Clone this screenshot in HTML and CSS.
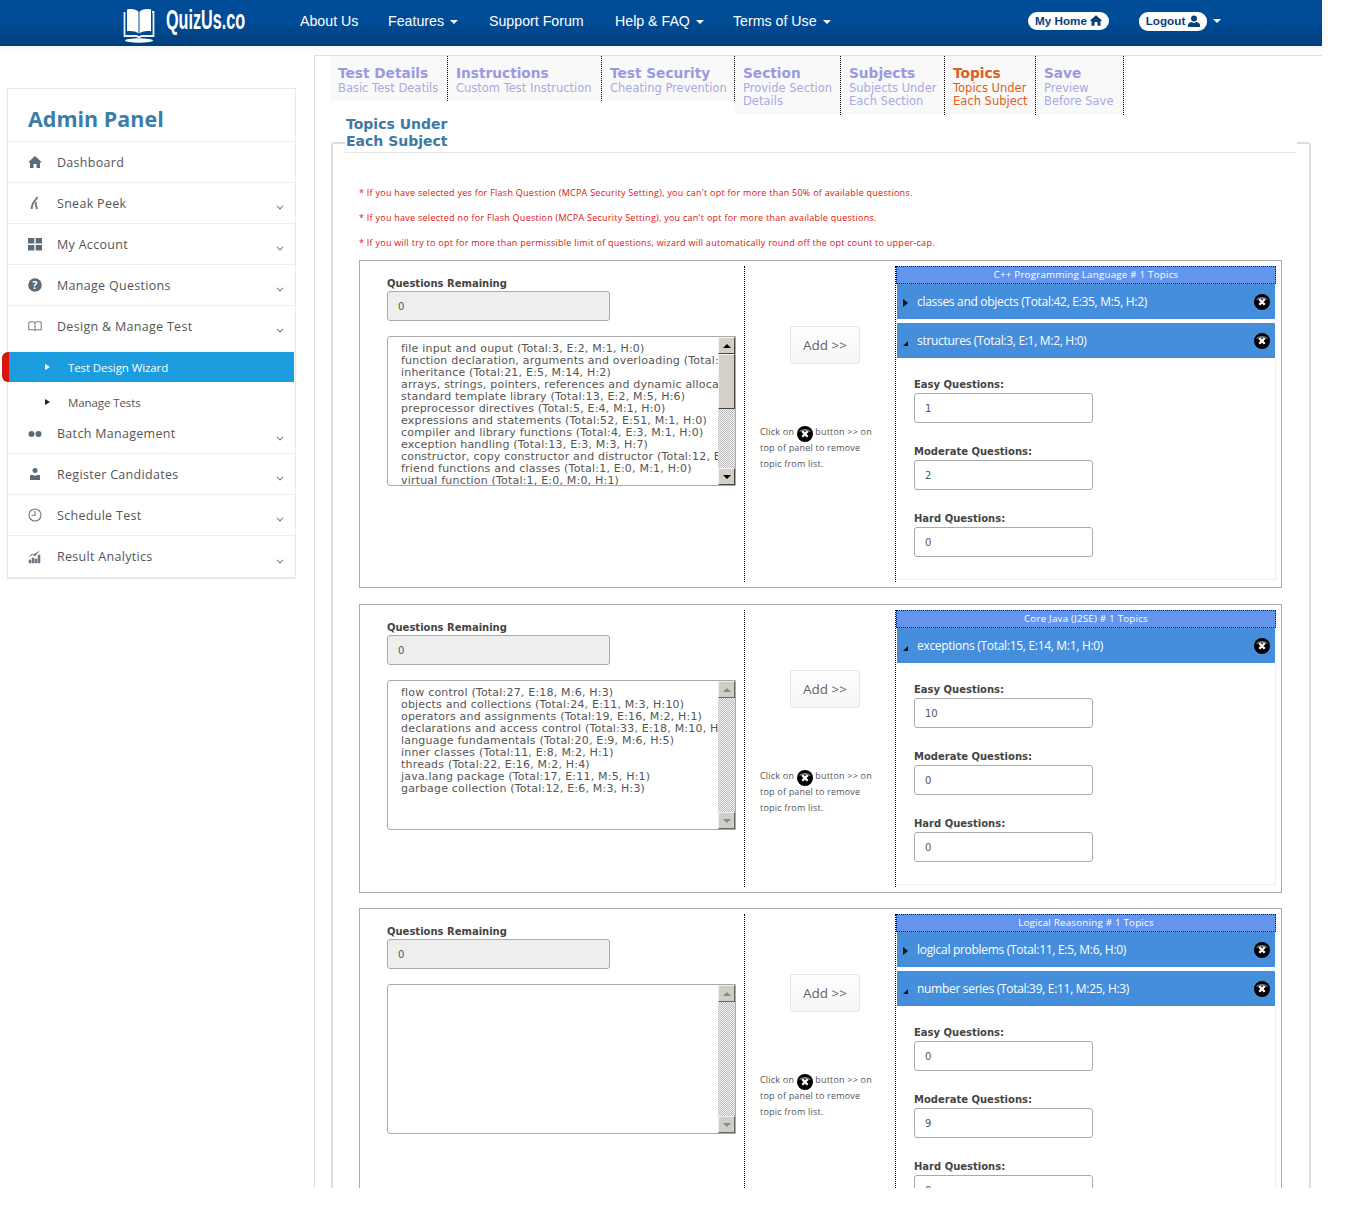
FILE: index.html
```html
<!DOCTYPE html>
<html lang="en">
<head>
<meta charset="utf-8">
<title>QuizUs.co</title>
<link rel="stylesheet" href="styles.css">
</head>
<body>
<div class="page">
<header class="topbar">
  <div class="logo">
    <svg class="logo-book" viewBox="0 0 32 36" width="32" height="36"><path d="M1.500 5v24h11.500c1 0 2 .8 3 1.500 1-.7 2-1.500 3-1.500h11.500V5h-1.500" fill="none" stroke="#e8f0f8" stroke-width="1.800"/><path d="M4 2.500c4.500-1 9-.5 11.500 2.200v21.800c-3-2.200-7-2.700-11.500-2.200zM28 2.500c-4.500-1-9-.5-11.500 2.200v21.800c3-2.200 7-2.700 11.500-2.200z" fill="#fff"/><ellipse cx="16" cy="33.500" rx="14" ry="2.200" fill="#fff"/></svg>
    <span class="logo-text">QuizUs.co</span>
  </div>
  <nav class="topnav">
    <a class="nav-a">About Us</a>
    <a class="nav-b">Features <i class="caret"></i></a>
    <a class="nav-c">Support Forum</a>
    <a class="nav-d">Help &amp; FAQ <i class="caret"></i></a>
    <a class="nav-e">Terms of Use <i class="caret"></i></a>
  </nav>
  <div class="pill pill-home">My Home <svg viewBox="0 0 16 14" width="12" height="11"><path d="M8 0l8 7-1 1-1-.8V14h-4V9H6v5H2V7.200L1 8 0 7z" fill="#0b3f78"/></svg></div>
  <div class="pill pill-logout">Logout <svg viewBox="0 0 14 14" width="12" height="12"><circle cx="7" cy="4" r="3.500" fill="#0b3f78"/><path d="M0 14v-2c0-2 2-3.500 4-3.800l3 1 3-1c2 .3 4 1.800 4 3.800v2z" fill="#0b3f78"/></svg></div>
  <i class="caret caret-logout"></i>
</header>

<div class="body-row">
  <aside class="sidebar">
    <h2 class="side-title">Admin Panel</h2>
    <div class="side-item"><svg class="side-icon" viewBox="0 0 14 14"><path d="M7 1l6.500 6-.8.8-.7-.6V13H8.500V9h-3v4H2V7.200l-.7.6L.5 7z" fill="#5d6b78"/></svg><span>Dashboard</span></div>
    <div class="side-item"><svg class="side-icon" viewBox="0 0 14 14"><path d="M9.500 1C8 4 5 6 4.300 9L3.500 13M8 6c-1 3 .5 4 1 7" fill="none" stroke="#6c7884" stroke-width="1.900"/></svg><span>Sneak Peek</span><i class="chev"></i></div>
    <div class="side-item"><svg class="side-icon" viewBox="0 0 14 14"><path d="M0 1h6.300v5.500H0zM7.700 1H14v5.500H7.700zM0 8h6.300v5.500H0zM7.700 8H14v5.500H7.700z" fill="#5d6b78"/></svg><span>My Account</span><i class="chev"></i></div>
    <div class="side-item"><svg class="side-icon" viewBox="0 0 14 14"><circle cx="7" cy="7" r="6.800" fill="#5d6b78"/><text x="7" y="11" class="q-mark">?</text></svg><span>Manage Questions</span><i class="chev"></i></div>
    <div class="side-item side-open"><svg class="side-icon" viewBox="0 0 14 14"><path d="M7 3.500C5.500 2.500 3 2.500 .8 3v8c2.200-.5 4.700-.5 6.200.5 1.500-1 4-1 6.200-.5V3C11 2.500 8.500 2.500 7 3.500zm0 0v8" fill="none" stroke="#6c7884"/></svg><span>Design &amp; Manage Test</span><i class="chev"></i></div>
    <div class="side-sub side-sub-active"><i class="tri-r tri-w"></i><span>Test Design Wizard</span></div>
    <div class="side-sub side-sub-plain"><i class="tri-r"></i><span>Manage Tests</span></div>
    <div class="side-item side-batch"><svg class="side-icon" viewBox="0 0 14 14"><circle cx="3.500" cy="7" r="3" fill="#5d6b78"/><circle cx="10.500" cy="7" r="3" fill="#5d6b78"/></svg><span>Batch Management</span><i class="chev"></i></div>
    <div class="side-item"><svg class="side-icon" viewBox="0 0 14 14"><circle cx="7" cy="3.500" r="2.500" fill="#5d6b78"/><path d="M2 13V8h3l2 1 2-1h3v5z" fill="#5d6b78"/></svg><span>Register Candidates</span><i class="chev"></i></div>
    <div class="side-item"><svg class="side-icon" viewBox="0 0 14 14"><circle cx="7" cy="7" r="6" fill="none" stroke="#6c7884" stroke-width="1.100"/><path d="M7 3v4.300H3.500" fill="none" stroke="#6c7884" stroke-width="1.100"/></svg><span>Schedule Test</span><i class="chev"></i></div>
    <div class="side-item"><svg class="side-icon" viewBox="0 0 14 14"><path d="M1 10h2v3H1zM4 8h2v5H4zM7 9h2v4H7zM10 5h2v8h-2zM1 7l3-3 3 2 4-5" fill="#6c7884" stroke="#6c7884" stroke-width=".6"/></svg><span>Result Analytics</span><i class="chev"></i></div>
  </aside>

  <main class="content">
    <div class="tabs">
      <div class="tab"><b>Test Details</b><span>Basic Test Deatils</span></div>
      <div class="tab"><b>Instructions</b><span>Custom Test Instruction</span></div>
      <div class="tab"><b>Test Security</b><span>Cheating Prevention</span></div>
      <div class="tab"><b>Section</b><span>Provide Section<br>Details</span></div>
      <div class="tab"><b>Subjects</b><span>Subjects Under<br>Each Section</span></div>
      <div class="tab tab-on"><b>Topics</b><span>Topics Under<br>Each Subject</span></div>
      <div class="tab"><b>Save</b><span>Preview<br>Before Save</span></div>
    </div>

    <section class="fieldset">
      <h3 class="legend">Topics Under<br>Each Subject</h3>
      <div class="notes">
        <p>* If you have selected yes for Flash Question (MCPA Security Setting), you can't opt for more than 50% of available questions.</p>
        <p>* If you have selected no for Flash Question (MCPA Security Setting), you can't opt for more than available questions.</p>
        <p>* If you will try to opt for more than permissible limit of questions, wizard will automatically round off the opt count to upper-cap.</p>
      </div>

      <div class="panel">
        <div class="col-left">
          <label class="lbl">Questions Remaining</label>
          <div class="field field-off">0</div>
          <div class="listbox">
            <div class="list-text">
              <div>file input and ouput (Total:3, E:2, M:1, H:0)</div>
              <div>function declaration, arguments and overloading (Total:23, E:12, M:8, H:3)</div>
              <div>inheritance (Total:21, E:5, M:14, H:2)</div>
              <div>arrays, strings, pointers, references and dynamic allocation (Total:30, E:20, M:6, H:4)</div>
              <div>standard template library (Total:13, E:2, M:5, H:6)</div>
              <div>preprocessor directives (Total:5, E:4, M:1, H:0)</div>
              <div>expressions and statements (Total:52, E:51, M:1, H:0)</div>
              <div>compiler and library functions (Total:4, E:3, M:1, H:0)</div>
              <div>exception handling (Total:13, E:3, M:3, H:7)</div>
              <div>constructor, copy constructor and distructor (Total:12, E:0, M:8, H:4)</div>
              <div>friend functions and classes (Total:1, E:0, M:1, H:0)</div>
              <div>virtual function (Total:1, E:0, M:0, H:1)</div>
            </div>
            <div class="sbar"><i class="sbtn"><i class="arr-up"></i></i><i class="sthumb"></i><i class="strack"></i><i class="sbtn"><i class="arr-down"></i></i></div>
          </div>
        </div>
        <div class="col-mid">
          <div class="add-btn">Add &gt;&gt;</div>
          <p class="hint">Click on <svg class="x-icon x-inline" viewBox="0 0 16 16"><use href="#xic"/></svg> button &gt;&gt; on<br>top of panel to remove<br>topic from list.</p>
        </div>
        <div class="col-right">
          <div class="subj">C++ Programming Language # 1 Topics</div>
          <div class="acc"><i class="acc-closed"></i><span>classes and objects (Total:42, E:35, M:5, H:2)</span><svg class="x-icon" viewBox="0 0 16 16"><use href="#xic"/></svg></div>
          <div class="acc acc-gap"><i class="acc-open"></i><span>structures (Total:3, E:1, M:2, H:0)</span><svg class="x-icon" viewBox="0 0 16 16"><use href="#xic"/></svg></div>
          <div class="acc-body">
            <label class="lbl">Easy Questions:</label><div class="field">1</div>
            <label class="lbl">Moderate Questions:</label><div class="field">2</div>
            <label class="lbl">Hard Questions:</label><div class="field">0</div>
          </div>
        </div>
      </div>

      <div class="panel">
        <div class="col-left">
          <label class="lbl">Questions Remaining</label>
          <div class="field field-off">0</div>
          <div class="listbox">
            <div class="list-text">
              <div>flow control (Total:27, E:18, M:6, H:3)</div>
              <div>objects and collections (Total:24, E:11, M:3, H:10)</div>
              <div>operators and assignments (Total:19, E:16, M:2, H:1)</div>
              <div>declarations and access control (Total:33, E:18, M:10, H:5)</div>
              <div>language fundamentals (Total:20, E:9, M:6, H:5)</div>
              <div>inner classes (Total:11, E:8, M:2, H:1)</div>
              <div>threads (Total:22, E:16, M:2, H:4)</div>
              <div>java.lang package (Total:17, E:11, M:5, H:1)</div>
              <div>garbage collection (Total:12, E:6, M:3, H:3)</div>
            </div>
            <div class="sbar sbar-off"><i class="sbtn"><i class="arr-up"></i></i><i class="strack"></i><i class="sbtn"><i class="arr-down"></i></i></div>
          </div>
        </div>
        <div class="col-mid">
          <div class="add-btn">Add &gt;&gt;</div>
          <p class="hint">Click on <svg class="x-icon x-inline" viewBox="0 0 16 16"><use href="#xic"/></svg> button &gt;&gt; on<br>top of panel to remove<br>topic from list.</p>
        </div>
        <div class="col-right">
          <div class="subj">Core Java (J2SE) # 1 Topics</div>
          <div class="acc"><i class="acc-open"></i><span>exceptions (Total:15, E:14, M:1, H:0)</span><svg class="x-icon" viewBox="0 0 16 16"><use href="#xic"/></svg></div>
          <div class="acc-body">
            <label class="lbl">Easy Questions:</label><div class="field">10</div>
            <label class="lbl">Moderate Questions:</label><div class="field">0</div>
            <label class="lbl">Hard Questions:</label><div class="field">0</div>
          </div>
        </div>
      </div>

      <div class="panel">
        <div class="col-left">
          <label class="lbl">Questions Remaining</label>
          <div class="field field-off">0</div>
          <div class="listbox">
            <div class="list-text"></div>
            <div class="sbar sbar-off"><i class="sbtn"><i class="arr-up"></i></i><i class="strack"></i><i class="sbtn"><i class="arr-down"></i></i></div>
          </div>
        </div>
        <div class="col-mid">
          <div class="add-btn">Add &gt;&gt;</div>
          <p class="hint">Click on <svg class="x-icon x-inline" viewBox="0 0 16 16"><use href="#xic"/></svg> button &gt;&gt; on<br>top of panel to remove<br>topic from list.</p>
        </div>
        <div class="col-right">
          <div class="subj">Logical Reasoning # 1 Topics</div>
          <div class="acc"><i class="acc-closed"></i><span>logical problems (Total:11, E:5, M:6, H:0)</span><svg class="x-icon" viewBox="0 0 16 16"><use href="#xic"/></svg></div>
          <div class="acc acc-gap"><i class="acc-open"></i><span>number series (Total:39, E:11, M:25, H:3)</span><svg class="x-icon" viewBox="0 0 16 16"><use href="#xic"/></svg></div>
          <div class="acc-body">
            <label class="lbl">Easy Questions:</label><div class="field">0</div>
            <label class="lbl">Moderate Questions:</label><div class="field">9</div>
            <label class="lbl">Hard Questions:</label><div class="field">0</div>
          </div>
        </div>
      </div>
    </section>
  </main>
</div>
</div>
<svg class="defs" width="0" height="0"><defs><g id="xic"><circle cx="8" cy="8" r="8" fill="#000"/><path d="M2 6a6.500 5 0 0 1 12 0 12 6 0 0 0-12 0z" fill="#777"/><path d="M5.300 5.300l5.400 5.400M10.700 5.300l-5.400 5.400" stroke="#fff" stroke-width="2.300"/></g></defs></svg>
</body>
</html>
```
FILE: styles.css
```css
* { box-sizing: border-box; }
html, body { margin: 0; padding: 0; background: #fff; }
body { font-family: "DejaVu Sans", sans-serif; color: #444; }
.defs { display: block; height: 0; }
.page { height: 1188px; overflow: hidden; }

.topbar {
  width: 1322px; height: 46px; display: flex; align-items: center;
  background: linear-gradient(#004c97 0%, #004c97 45%, #003f7c 100%);
  box-shadow: 0 2px 8px rgba(0,0,0,.06);
  color: #fff;
}
.logo { display: flex; align-items: center; margin-left: 123px; width: 177px; flex: none; }
.logo-book { margin-top: 4px; flex: none; }
.logo-text {
  display: inline-block; margin-left: 11px; margin-top: -6px; font: bold 27px/30px "Liberation Sans", sans-serif;
  transform: scaleX(.6); transform-origin: left center; white-space: nowrap;
}
.topnav { display: flex; font: 14.200px/20px "Liberation Sans", sans-serif; margin-top: -5px; width: 728px; flex: none; }
.topnav a { color: #fff; }
.nav-a { width: 88px; } .nav-b { width: 101px; } .nav-c { width: 126px; } .nav-d { width: 118px; }
.caret { display: inline-block; width: 0; height: 0; margin-left: 2px; vertical-align: 2px;
  border-left: 4px solid transparent; border-right: 4px solid transparent; border-top: 4px solid #fff; }
.pill {
  display: flex; align-items: center; justify-content: center; gap: 3px; background: #fff; color: #0b3f78;
  font: bold 11.700px/16px "Liberation Sans", sans-serif; border-radius: 9px; flex: none;
}
.pill-home { width: 81px; height: 18px; margin-top: -5px; }
.pill-logout { width: 68px; height: 19px; margin-left: 30px; margin-top: -4px; }
.caret-logout { margin-left: 6px; margin-top: -4px; }

.body-row { display: flex; align-items: flex-start; }
.sidebar {
  width: 289px; margin: 42px 0 0 7px; border: 1px solid #e8e8e8; border-bottom-width: 2px;
  font-family: "Open Sans", sans-serif; background: #fff; flex: none;
}
.side-title {
  margin: 0; height: 53px; padding-left: 20px; font: 700 21.500px/59px "Open Sans", sans-serif;
  color: #3a7ea8; border-bottom: 1px solid #eee;
}
.side-item {
  display: flex; align-items: center; height: 41px; padding: 0 12px 0 20px; border-bottom: 1px solid #eee;
  font-size: 12.500px; letter-spacing: .3px; color: #555;
}
.side-item:last-child { border-bottom: 0; }
.side-icon { width: 14px; height: 14px; margin-right: 15px; flex: none; }
.q-mark { font: bold 11px "Open Sans", sans-serif; fill: #fff; text-anchor: middle; }
.chev {
  width: 6px; height: 6px; margin-left: auto; margin-top: 6px;
  border-right: 1px solid #666; border-bottom: 1px solid #666; transform: rotate(45deg) scale(.8);
}
.side-open { height: 46px; padding-bottom: 5px; border-bottom: 1px solid #f6f6f6; }
.side-sub {
  display: flex; align-items: center; height: 30px; padding-left: 37px; color: #555; font-size: 11.500px; letter-spacing: -.1px;
}
.side-sub-active {
  margin: 0 1px 0 -6px; padding-left: 36px; color: #fff; background: #1b9ddf;
  border-left: 7px solid #d8160f; border-radius: 6px 0 0 6px;
}
.side-sub-plain { height: 32px; padding-top: 8px; }
.tri-r { width: 0; height: 0; margin-right: 18px; border-left: 5px solid #222; border-top: 3px solid transparent; border-bottom: 3px solid transparent; }
.tri-w { border-left-color: #fff; }
.side-batch { height: 40px; }

.content { width: 1008px; margin: 9px 0 0 18px; border-top: 1px solid #ddd; border-left: 1px solid #ddd; padding: 0 0 0 15px; flex: none; }
.tabs {
  display: grid; grid-template-columns: 118px 154px 133px 106px 104px 91px 88px; align-items: start; height: 59px;
}
.tab { padding: 8px 8px 0; background: #f9f9f9; border-right: 1px dotted #000; height: 45px; color: #9a9ae0; overflow: hidden; white-space: nowrap; }
.tab:nth-child(n+4) { height: 59px; }
.tab b { display: block; font-size: 13.700px; line-height: 18px; }
.tab span { display: block; font-size: 11.500px; line-height: 13px; color: #a9a9e4; }
.tab-on { color: #dc5f22; }
.tab-on span { color: #dc5f22; }

.fieldset {
  width: 980px; margin: 27px 0 0 1px; border: 2px solid #ddd; border-bottom: 0; border-radius: 3px 3px 0 0; padding: 0 26px;
}
.legend {
  width: 952px; margin: -28px 0 0 -14px; padding: 0 0 0 1px; height: 37px; background: #fff; border-bottom: 1px solid #e5e5e5;
  font-size: 14px; line-height: 17px; color: #3e78a5; font-weight: bold;
}
.notes { padding-top: 27px; font: 9px/25px "Open Sans", sans-serif; color: #d11; letter-spacing: .26px; }
.notes p { margin: 0; }

.panel { display: flex; border: 1px solid #aaa; width: 923px; margin-bottom: 15px; padding: 5px 5px 5px 0; }
.notes + .panel { margin-top: 5px; margin-bottom: 16px; }
.col-left { width: 385px; padding: 11px 0 0 27px; border-right: 1px dotted #000; flex: none; }
.col-mid { width: 151px; padding-top: 60px; border-right: 1px dotted #000; flex: none; }
.col-right { width: 380px; flex: none; }
.lbl { display: block; font-size: 10px; font-weight: bold; line-height: 13px; color: #444; }
.field {
  width: 223px; height: 30px; margin-top: 2px; padding: 1px 0 0 10px; border: 1px solid #aaa; border-radius: 3px;
  font-size: 10px; line-height: 28px; color: #555; background: #fff;
}
.field-off { background: #eee; margin-top: 1px; }
.listbox { display: flex; width: 349px; height: 150px; margin-top: 15px; border: 1px solid #aaa; border-radius: 3px 0 0 3px; overflow: hidden; }
.list-text { flex: 1; min-width: 0; padding: 6px 0 0 13px; font-size: 11px; letter-spacing: .2px; line-height: 12px; color: #555; white-space: nowrap; overflow: hidden; }
.sbar { width: 17px; display: flex; flex-direction: column; flex: none; }
.sbar i { display: block; }
.sbtn {
  height: 17px; background: #d4d0c8; border: 1px solid; border-color: #f4f4f4 #444 #444 #f4f4f4; display: flex !important; align-items: center; justify-content: center; flex: none;
}
.sbtn i { width: 0; height: 0; border-left: 4px solid transparent; border-right: 4px solid transparent; }
.arr-up { border-bottom: 4px solid #000; }
.arr-down { border-top: 4px solid #000; }
.sthumb { height: 55px; background: #d4d0c8; border: 1px solid; border-color: #f4f4f4 #444 #444 #f4f4f4; flex: none; }
.strack { flex: 1; background: repeating-conic-gradient(#bbb 0 25%, #f4f4f4 0 50%) 0 0 / 2px 2px; }
.sbar-off .sbtn { background: #cfcfc8; border-color: #eee #666 #666 #eee; }
.sbar-off .arr-up { border-bottom-color: #888; }
.sbar-off .arr-down { border-top-color: #888; }

.add-btn {
  width: 70px; height: 38px; margin-left: 45px; border: 1px solid #e6e6e6; border-radius: 3px;
  background: linear-gradient(#fff, #f6f6f6); font: 13.500px/36px "Open Sans", sans-serif; text-align: center; color: #666;
}
.hint { margin: 60px 0 0 15px; font: 9px/16px "Open Sans", sans-serif; color: #555; letter-spacing: .2px; }
.x-icon { width: 16px; height: 16px; flex: none; margin-left: auto; }
.x-inline { vertical-align: -5px; margin: 0 0 -2px; }

.subj {
  height: 18px; background: #6495ed; border: 1px dotted #001a55; color: #fff; text-align: center;
  font: 9.800px/16px "Open Sans", sans-serif; letter-spacing: .2px;
}
.acc {
  display: flex; align-items: center; height: 35px; margin: 0 1px; padding: 0 5px 0 6px; background: #448edc;
  color: #fff; font: 12px/16px "Open Sans", sans-serif; letter-spacing: -.3px;
}
.acc span { margin-left: 9px; }
.acc-gap { margin-top: 4px; }
.acc-closed { width: 0; height: 0; border-left: 5px solid #111; border-top: 4px solid transparent; border-bottom: 4px solid transparent; margin-top: 2px; }
.acc-open { width: 0; height: 0; border-right: 5px solid #111; border-top: 5px solid transparent; margin-top: 6px; }
.acc-body {
  margin: 0 0 2px 1px; width: 379px; padding: 20px 0 22px 17px; border-right: 1px solid #eee; border-bottom: 1px solid #eee;
}
.acc-body .field { width: 179px; margin-bottom: 22px; }
.acc-body .field:last-child { margin-bottom: 0; }
```
